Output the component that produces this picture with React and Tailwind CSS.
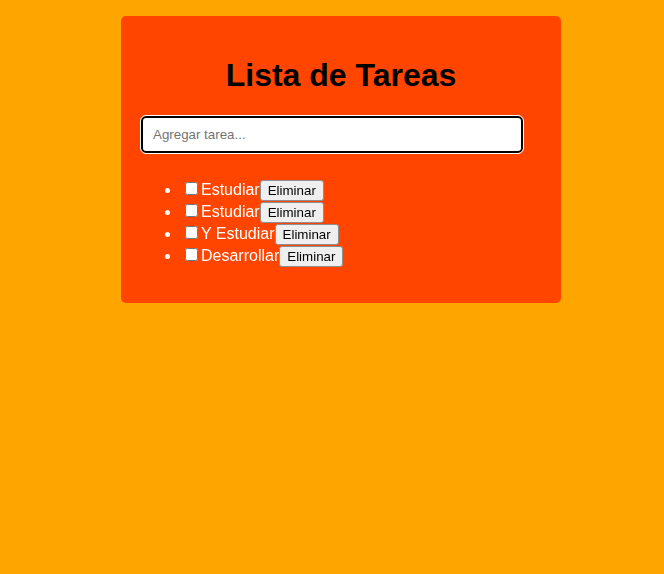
import { useState } from 'react'

const initial = ['Estudiar', 'Estudiar', 'Y Estudiar', 'Desarrollar']

export default function App() {
  const [tasks, setTasks] = useState(initial)
  const [text, setText] = useState('')

  const add = (e) => {
    if (e.key === 'Enter' && text.trim()) {
      setTasks([...tasks, text.trim()])
      setText('')
    }
  }

  return (
    <div className="flex min-h-[574px] justify-center bg-[#ffa500] pt-4 pl-[18px] font-['Liberation_Sans',Arial,sans-serif]">
      <div className="h-fit w-[440px] rounded-[5px] bg-[#ff4500] p-5">
        <h1 className="my-[21.44px] text-center text-[32px] leading-[37px] font-bold text-black">
          Lista de Tareas
        </h1>
        <input
          autoFocus
          value={text}
          onChange={(e) => setText(e.target.value)}
          onKeyDown={add}
          placeholder="Agregar tarea..."
          className="mb-[10px] box-border block h-[37px] w-[382px] rounded-[5px] border-2 border-black bg-white px-[10px] text-[13.33px] text-black outline outline-1 outline-white placeholder:text-[#757575]"
        />
        <ul className="mt-[26px] mb-4 list-disc pl-10 text-base text-white">
          {tasks.map((task, i) => (
            <li key={i} className="h-[22px] leading-[22px]">
              <input type="checkbox" className="mt-[3px] mr-[3px] mb-[3px] ml-[4px] h-[13px] w-[13px]" />
              {task}
              <button
                type="button"
                onClick={() => setTasks(tasks.filter((_, j) => j !== i))}
                className="h-[21px] rounded-[3px] border border-[#8f8f8f] bg-[#efefef] px-[7px] align-baseline text-[13.33px] leading-[17px] text-black"
              >
                Eliminar
              </button>
            </li>
          ))}
        </ul>
      </div>
    </div>
  )
}
